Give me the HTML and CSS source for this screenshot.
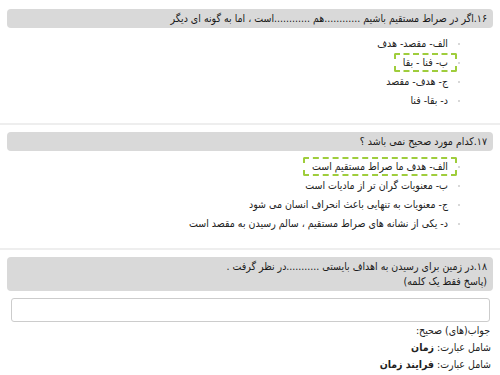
FILE: index.html
```html
<!DOCTYPE html>
<html lang="fa" dir="rtl">
<head>
<meta charset="utf-8">
<link rel="stylesheet" href="styles.css">
</head>
<body>
<div class="card first">
  <div class="qhead">۱۶.اگر در صراط مستقیم باشیم ............هم ............است ، اما به گونه ای دیگر</div>
  <ul class="opts">
    <li><span class="opt">الف- مقصد- هدف</span></li>
    <li><span class="opt sel">ب- فنا - بقا</span></li>
    <li><span class="opt">ج- هدف- مقصد</span></li>
    <li><span class="opt">د- بقا- فنا</span></li>
  </ul>
</div>
<div class="card second">
  <div class="qhead">۱۷.کدام مورد صحیح نمی باشد ؟</div>
  <ul class="opts">
    <li><span class="opt sel">الف- هدف ما صراط مستقیم است</span></li>
    <li><span class="opt">ب- معنویات گران تر از مادیات است</span></li>
    <li><span class="opt">ج- معنویات به تنهایی باعث انحراف انسان می شود</span></li>
    <li><span class="opt">د- یکی از نشانه های صراط مستقیم ، سالم رسیدن به مقصد است</span></li>
  </ul>
</div>
<div class="card last">
  <div class="qhead">۱۸.در زمین برای رسیدن به اهداف بایستی ...........در نظر گرفت .<br>(پاسخ فقط یک کلمه)</div>
  <div class="answer-input"></div>
  <div class="answers">
    <div class="ans-title">جواب(های) صحیح:</div>
    <div>شامل عبارت: <b>زمان</b></div>
    <div>شامل عبارت: <b>فرایند زمان</b></div>
  </div>
</div>
</body>
</html>
```
FILE: styles.css
```css
html, body {
  margin: 0;
  padding: 0;
  background: #fff;
}
body {
  font-family: "DejaVu Sans Condensed", "DejaVu Sans", sans-serif;
  font-size: 10.5px;
  color: #222;
  padding-top: 2px;
}
.card {
  padding: 7px 7px 13px;
  border-bottom: 2px solid #eeeeee;
}
.card.second {
  padding-bottom: 15px;
}
.qhead {
  background: #d9d9d9;
  border-radius: 4px;
  padding: 2px 6px;
  line-height: 15px;
  color: #1a1a1a;
}
.opts {
  list-style: none;
  margin: 6px 0 0;
  padding: 0 33px 0 0;
}
.opts li {
  display: flex;
  align-items: center;
  height: 19px;
}
.opts li::before {
  content: "";
  width: 2px;
  height: 2px;
  background: #d8d8d8;
  margin-left: 1px;
  flex: none;
}
.opt {
  display: inline-block;
  border: 2px dashed transparent;
  border-radius: 2px;
  padding: 0 7px;
  line-height: 15px;
  color: #222;
}
.opt.sel {
  border-color: #9fcd3c;
}
.last {
  border-bottom: none;
}
.answer-input {
  margin: 7px 3px 0 4px;
  height: 22px;
  border: 1px solid #cccccc;
  border-radius: 3px;
  background: #fff;
}
.answers {
  padding-right: 2px;
  line-height: 17px;
  color: #222;
}
.ans-title {
  padding-right: 1px;
}
```
